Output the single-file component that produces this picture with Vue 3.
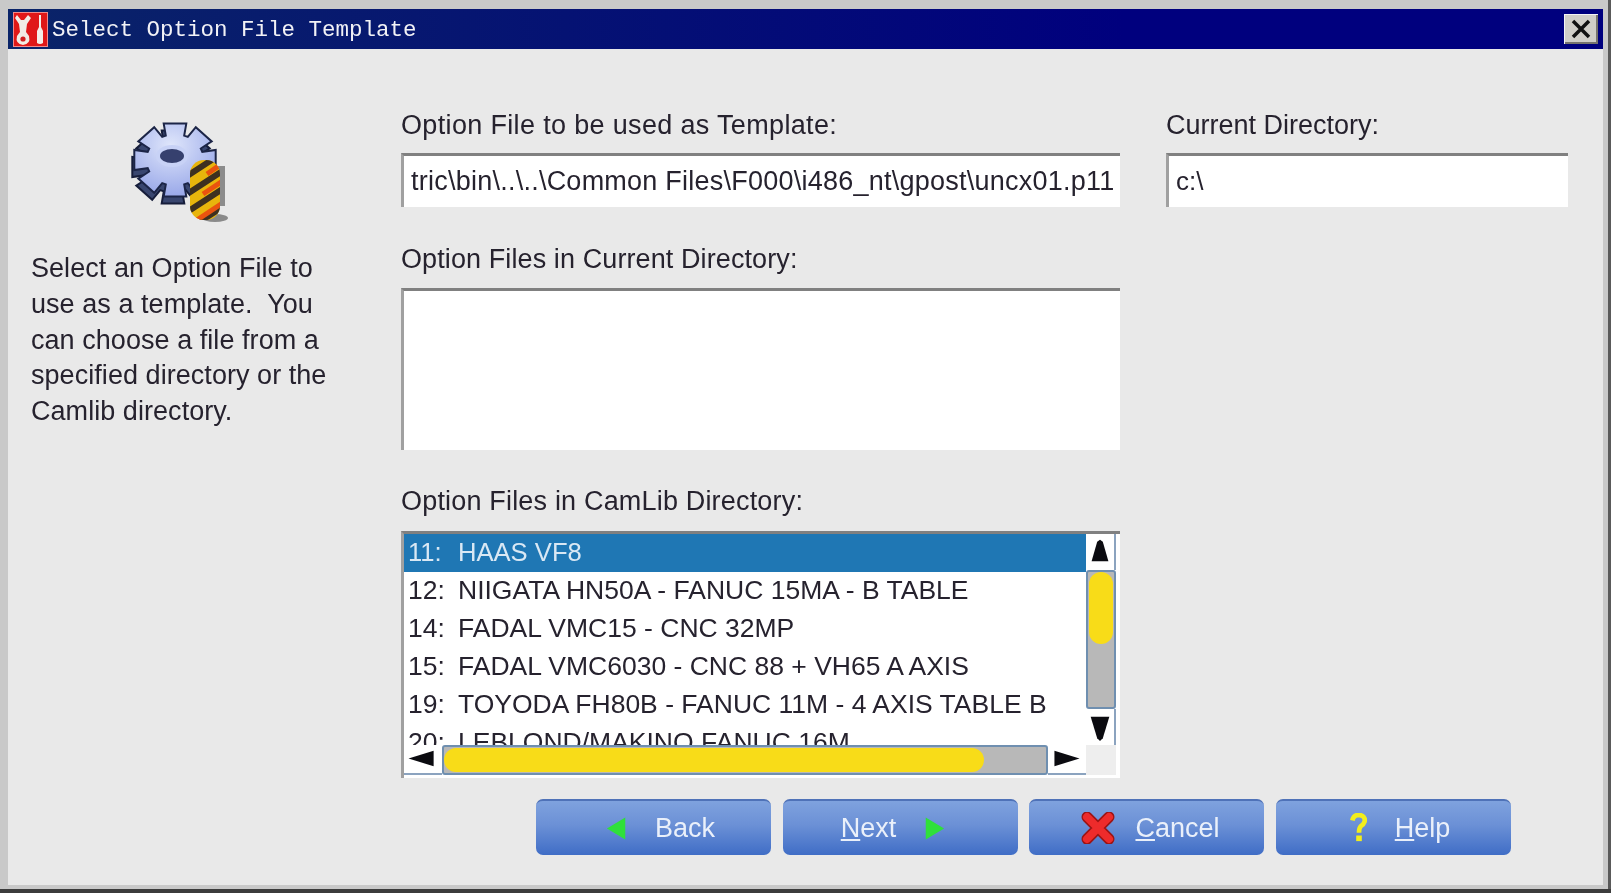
<script setup>
const rows = [
  ['11:', 'HAAS VF8'],
  ['12:', 'NIIGATA HN50A - FANUC 15MA - B TABLE'],
  ['14:', 'FADAL VMC15 - CNC 32MP'],
  ['15:', 'FADAL VMC6030 - CNC 88 + VH65 A AXIS'],
  ['19:', 'TOYODA FH80B - FANUC 11M - 4 AXIS TABLE B'],
  ['20:', 'LEBLOND/MAKINO FANUC 16M'],
]
const gear = (() => {
  const pts = []
  const n = 8
  for (let i = 0; i < n; i++) {
    const a = (i / n) * Math.PI * 2 - Math.PI / 2
    const w = 0.27
    for (const [r, d] of [[28, -w * 1.2], [41, -w], [41, w], [28, w * 1.2]]) {
      pts.push(`${(Math.cos(a + d) * r * 1.03).toFixed(1)},${(Math.sin(a + d) * r * 0.92).toFixed(1)}`)
    }
  }
  return pts.join(' ')
})()
</script>

<template>
  <div class="window">
    <header class="titlebar">
      <svg class="app-icon" viewBox="0 0 35 35" aria-hidden="true">
        <rect width="35" height="35" fill="#e01818" />
        <rect x="0.5" y="0.5" width="34" height="34" fill="none" stroke="#f08a8a" />
        <path d="M4 3 L8 8 L11 8 L15 3 L18 6 L14 12 L13 20 L16 24 Q18 32 10 33 Q2 32 4 24 L7 20 L6 12 L2 6 Z" fill="#f1ece4" />
        <circle cx="10" cy="27" r="2.6" fill="#d02020" />
        <path d="M26 3 L28 3 L28 15 L30 19 L30 31 Q27 33 24 31 L24 19 L26 15 Z" fill="#f4eee8" />
      </svg>
      <span class="title">Select Option File Template</span>
      <span class="close" aria-label="Close">
        <svg viewBox="0 0 34 30"><path d="M9 7 L25 23 M25 7 L9 23" stroke="#111" stroke-width="3.5" /></svg>
      </span>
    </header>

    <div class="body">
      <aside class="side">
        <svg class="wizard-icon" viewBox="0 0 100 104" aria-hidden="true">
          <defs>
            <clipPath id="barrel"><rect x="59" y="38" width="30" height="60" rx="14" /></clipPath>
            <radialGradient id="face" cx="0.45" cy="0.3" r="0.8">
              <stop offset="0" stop-color="#dfe6fb" />
              <stop offset="1" stop-color="#8f9fe6" />
            </radialGradient>
          </defs>
          <ellipse cx="84" cy="96" rx="13" ry="4" fill="#8a8a8a" />
          <rect x="86" y="44" width="8" height="40" fill="#8c8c8c" />
          <g transform="translate(44 38)">
            <polygon :points="gear" transform="translate(-2 7)" fill="#39466f" stroke="#161d3a" stroke-width="2" />
            <polygon :points="gear" fill="url(#face)" stroke="#1c2547" stroke-width="2" />
            <ellipse cx="-3" cy="-4" rx="16" ry="11" fill="#c8d2f6" />
            <ellipse cx="-3" cy="-4" rx="12" ry="7" fill="#36406e" />
          </g>
          <g clip-path="url(#barrel)">
            <rect x="59" y="38" width="30" height="60" fill="#e8b50c" />
            <path d="M50 58 L96 28 M50 76 L96 46 M50 94 L96 64 M50 112 L96 82" stroke="#3d3020" stroke-width="6" />
            <path d="M60 102 L96 78 M72 72 L96 56 M76 52 L96 38" stroke="#e9540f" stroke-width="5" />
          </g>
        </svg>
        <p class="help-text">Select an Option File to<br />use as a template.&nbsp; You<br />can choose a file from a<br />specified directory or the<br />Camlib directory.</p>
      </aside>

      <main class="middle">
        <label class="label wide">Option File to be used as Template:</label>
        <div class="field path">tric\bin\..\..\Common Files\F000\i486_nt\gpost\uncx01.p11</div>

        <label class="label next">Option Files in Current Directory:</label>
        <div class="empty-list"></div>

        <label class="label next-list">Option Files in CamLib Directory:</label>
        <div class="listbox">
          <div class="list-main">
            <ul class="rows">
              <li v-for="(row, i) in rows" :key="row[0]" class="row" :class="{ selected: i === 0 }">
                <span class="num">{{ row[0] }}</span><span>{{ row[1] }}</span>
              </li>
            </ul>
            <div class="vscroll">
              <span class="arrow-btn v"><svg viewBox="0 0 30 36"><path d="M15 5 L18 7 L24 28 L6 28 L12 7 Z" fill="#0b0b10" /></svg></span>
              <div class="vtrack"><div class="vthumb"></div></div>
              <span class="arrow-btn v"><svg viewBox="0 0 30 36"><path d="M5 7 L25 7 L18 30 L15 33 L12 30 Z" fill="#0b0b10" /></svg></span>
            </div>
          </div>
          <div class="hscroll">
            <span class="arrow-btn h"><svg viewBox="0 0 38 29"><path d="M4 14 L30 6 L30 22 Z" fill="#0b0b10" /></svg></span>
            <div class="htrack"><div class="hthumb"></div></div>
            <span class="arrow-btn h"><svg viewBox="0 0 38 29"><path d="M32 14 L6 6 L6 22 Z" fill="#0b0b10" /></svg></span>
            <span class="corner"></span>
          </div>
        </div>
      </main>

      <section class="dir-col">
        <label class="label dir">Current Directory:</label>
        <div class="field">c:\</div>
      </section>
    </div>

    <footer class="footer">
      <button class="btn shift-r">
        <svg class="btn-icon" viewBox="0 0 24 26"><path d="M1 13 L21 1 L21 25 Z" fill="#2fe03a" /></svg>
        <span class="btn-label">Back</span>
      </button>
      <button class="btn shift-l">
        <span class="btn-label"><u>N</u>ext</span>
        <svg class="btn-icon" viewBox="0 0 24 26"><path d="M23 13 L3 1 L3 25 Z" fill="#2fe03a" /></svg>
      </button>
      <button class="btn tight">
        <svg class="btn-icon x" viewBox="0 0 34 32"><path d="M6 5 L28 27 M28 5 L6 27" stroke="#9c1414" stroke-width="11" stroke-linecap="round" /><path d="M6 5 L28 27 M28 5 L6 27" stroke="#ee2b2b" stroke-width="8" stroke-linecap="round" /></svg>
        <span class="btn-label"><u>C</u>ancel</span>
      </button>
      <button class="btn shift-r">
        <svg class="btn-icon q" viewBox="0 0 18 32"><path d="M2 8 Q3 2 9 2 Q16 3 15 9 Q14 12 11 14 Q9 16 9 21" fill="none" stroke="#f2ee1c" stroke-width="5" /><rect x="6" y="24" width="6" height="6" fill="#f2ee1c" /></svg>
        <span class="btn-label"><u>H</u>elp</span>
      </button>
    </footer>
  </div>
</template>

<style>
html, body { margin: 0; background: #e9e9e9; }
</style>

<style scoped>
.window {
  box-sizing: border-box;
  width: 1611px;
  height: 893px;
  display: flex;
  flex-direction: column;
  background: #e9e9e9;
  border: solid #c9c9c9;
  border-width: 9px 8px 8px 8px;
  position: relative;
  font-family: "Liberation Sans", Arial, sans-serif;
  color: #26222e;
  filter: blur(0.4px);
}
.window::after {
  content: "";
  position: absolute;
  left: -8px;
  right: -8px;
  bottom: -8px;
  height: 4px;
  background: #3c3c3c;
}
.window::before {
  content: "";
  position: absolute;
  top: -9px;
  right: -8px;
  bottom: -8px;
  width: 3px;
  background: #5a5a5a;
}
.titlebar {
  height: 40px;
  flex: none;
  display: flex;
  align-items: center;
  background: linear-gradient(90deg, #0a2468, #00007e 70%);
  color: #f2f2f6;
}
.app-icon { width: 35px; height: 35px; margin-left: 5px; flex: none; }
.title {
  margin: 2px 0 0 4px;
  font: 22.5px "Liberation Mono", monospace;
  flex: 1;
}
.close {
  width: 34px;
  height: 30px;
  margin-right: 5px;
  background: #d0cec8;
  box-shadow: inset 1px 1px 0 #f4f4f4, inset -2px -2px 0 #77746e;
  display: block;
}
.close svg { display: block; width: 100%; height: 100%; }
.body {
  flex: 1;
  display: grid;
  grid-template-columns: 393px 719px 448px;
  align-items: start;
}
.side { padding: 73px 0 0 23px; }
.wizard-icon { display: block; width: 100px; height: 104px; margin-left: 100px; }
.help-text {
  margin: 25px 0 0;
  font-size: 27px;
  line-height: 35.8px;
  letter-spacing: 0.05px;
  white-space: nowrap;
}
.middle { padding-top: 58px; display: flex; flex-direction: column; }
.dir-col { padding: 58px 0 0 46px; display: flex; flex-direction: column; }
.label {
  display: block;
  height: 36px;
  line-height: 36px;
  font-size: 27px;
  letter-spacing: 0.1px;
  margin-bottom: 10px;
  white-space: nowrap;
}
.label.wide { letter-spacing: 0.34px; }
.label.dir { letter-spacing: 0; }
.label.next { margin-top: 34px; margin-bottom: 11px; }
.label.next-list { margin-top: 33px; margin-bottom: 12px; letter-spacing: 0.18px; }
.field {
  box-sizing: border-box;
  height: 54px;
  padding-left: 7px;
  line-height: 50px;
  font-size: 26px;
  background: #fff;
  border-top: 3px solid #808080;
  border-left: 3px solid #a0a0a0;
  white-space: nowrap;
  overflow: hidden;
}
.field.path { font-size: 27px; letter-spacing: 0.24px; }
.empty-list {
  box-sizing: border-box;
  height: 162px;
  background: #fff;
  border-top: 3px solid #808080;
  border-left: 3px solid #a0a0a0;
}
.listbox {
  box-sizing: border-box;
  height: 247px;
  background: #fff;
  border-top: 3px solid #808080;
  border-left: 3px solid #a0a0a0;
  padding-right: 4px;
  padding-bottom: 3px;
  display: flex;
  flex-direction: column;
}
.list-main { display: flex; height: 211px; flex: none; }
.rows {
  flex: 1;
  margin: 0;
  padding: 0;
  list-style: none;
  overflow: hidden;
}
.row {
  height: 38px;
  line-height: 36px;
  padding-left: 4px;
  font-size: 26.5px;
  white-space: nowrap;
  display: flex;
}
.row.selected { background: #1f77b4; color: #d9e8f4; font-size: 25.6px; }
.num { width: 50px; flex: none; }
.vscroll { width: 30px; flex: none; display: flex; flex-direction: column; }
.arrow-btn { display: block; background: #fff; box-sizing: border-box; flex: none; }
.arrow-btn svg { display: block; width: 100%; height: 100%; }
.arrow-btn.v { height: 36px; border-right: 2px solid #8ba3bf; }
.vtrack {
  flex: 1;
  background: #b8b8b8;
  border: 2px solid #6f8fb0;
  border-radius: 3px;
}
.vthumb {
  width: 24px;
  height: 72px;
  margin: 0 auto;
  background: #f8dc18;
  border-radius: 12px;
}
.hscroll { display: flex; height: 30px; flex: none; }
.arrow-btn.h { width: 38px; border-bottom: 2px solid #8ba3bf; }
.htrack {
  flex: 1;
  background: #b8b8b8;
  border: 2px solid #6f8fb0;
  border-radius: 3px;
  box-sizing: border-box;
}
.hthumb {
  width: 540px;
  height: 24px;
  margin-top: 1px;
  background: #f8dc18;
  border-radius: 12px;
}
.corner { width: 30px; flex: none; background: #eeeeee; }
.footer {
  flex: none;
  height: 86px;
  display: flex;
  gap: 11.5px;
  padding-left: 528px;
}
.btn {
  box-sizing: border-box;
  width: 235px;
  height: 56px;
  padding: 0;
  display: flex;
  align-items: center;
  justify-content: center;
  gap: 27px;
  border: none;
  border-top: 2px solid #4f72b8;
  border-radius: 7px;
  background: linear-gradient(180deg, #7fa2de 0%, #6b90d6 45%, #3f6dc6 100%);
  color: #eaf0fa;
  font: 27px "Liberation Sans", Arial, sans-serif;
}
.btn.shift-r { padding-left: 14px; }
.btn.shift-l { padding-right: 14px; }
.btn.tight { gap: 20px; padding-left: 8px; }
.btn-icon { width: 22px; height: 25px; flex: none; }
.btn-icon.x { width: 34px; height: 32px; }
.btn-icon.q { width: 18px; height: 30px; }
.btn-label { display: block; }
</style>
